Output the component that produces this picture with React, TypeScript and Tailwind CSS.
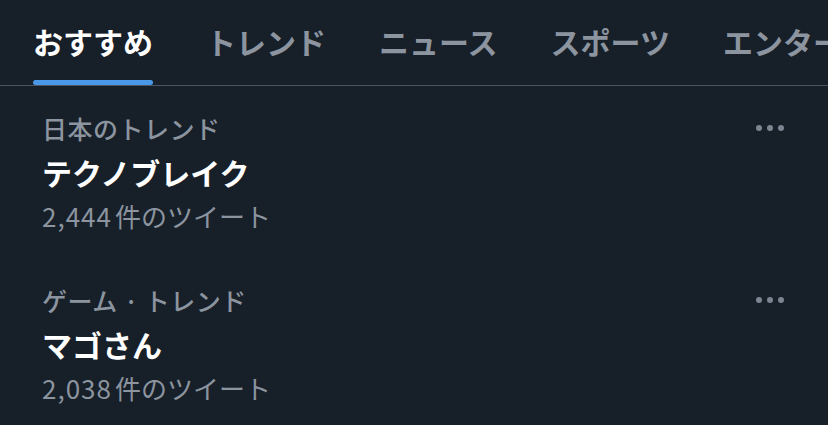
const tabs = ["おすすめ", "トレンド", "ニュース", "スポーツ", "エンターテイメント"];

const trends = [
  { category: "日本のトレンド", title: "テクノブレイク", count: "2,444" },
  { category: "ゲーム · トレンド", title: "マゴさん", count: "2,038" },
];

function MoreDots() {
  return (
    <div className="flex items-center gap-[5px] pt-[19px]">
      <span className="block w-[6px] h-[6px] rounded-full bg-[#7c8591]" />
      <span className="block w-[6px] h-[6px] rounded-full bg-[#7c8591]" />
      <span className="block w-[6px] h-[6px] rounded-full bg-[#7c8591]" />
    </div>
  );
}

export default function App() {
  return (
    <div
      className="w-[828px] h-[425px] overflow-hidden bg-[#171f29] text-white"
      style={{ fontFamily: '"Noto Sans CJK JP", "Noto Sans", sans-serif' }}
    >
      <nav className="flex gap-[53px] pl-[33px] h-[86px] border-b border-[#4d5561] whitespace-nowrap overflow-hidden">
        {tabs.map((t, i) => (
          <div key={t} className="flex flex-col justify-between pt-[21px] shrink-0">
            <span
              className={
                "text-[30px] font-bold leading-[40px] " +
                (i === 0 ? "text-white" : "text-[#8b949f]")
              }
            >
              {t}
            </span>
            {i === 0 ? (
              <span className="block h-[5px] rounded-full bg-[#4a99e9]" />
            ) : (
              <span className="block h-[5px]" />
            )}
          </div>
        ))}
      </nav>

      <ul>
        {trends.map((tr) => (
          <li key={tr.title} className="flex items-start justify-between pl-[42px] pr-[44px] py-[20px]">
            <div className="flex flex-col">
              <span className="text-[25px] font-medium leading-[44px] tracking-[0.5px] text-[#8b949f]">
                {tr.category}
              </span>
              <span className="text-[30px] font-bold leading-[44px] text-white">{tr.title}</span>
              <span className="text-[26px] leading-[44px] text-[#8b949f]">
                <span className="tracking-[1px]">{tr.count}</span>
                <span className="ml-[3px]">件のツイート</span>
              </span>
            </div>
            <MoreDots />
          </li>
        ))}
      </ul>
    </div>
  );
}
